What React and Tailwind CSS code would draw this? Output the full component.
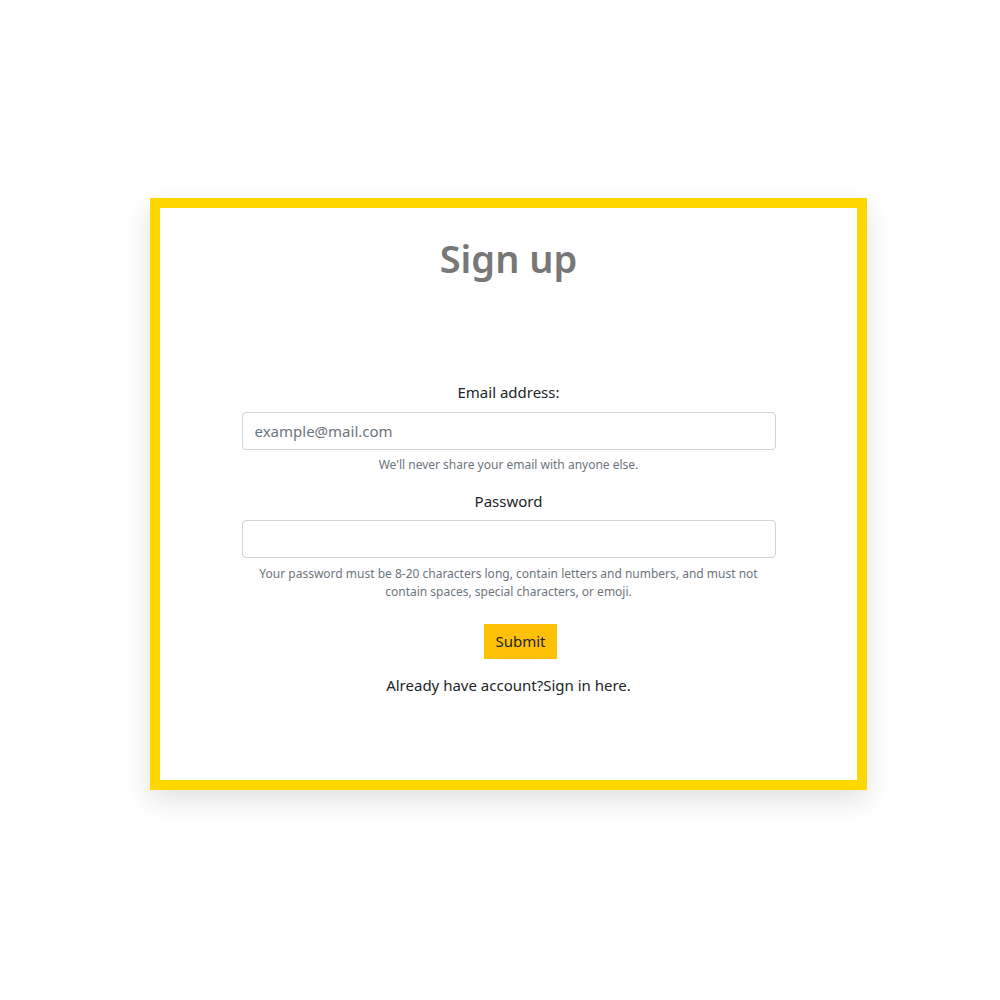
import React, { useState } from 'react';

const App = () => {
    const [email, setEmail] = useState('');
    const [password, setPassword] = useState('');

    return (
        <div className="min-h-[1000px] bg-white pt-[198px] pl-[150px]" style={{ fontFamily: '"Noto Sans", "Open Sans", sans-serif' }}>
            <div className="w-[717px] h-[592px] border-[10px] border-[#ffd700] bg-white shadow-[0_10px_25px_rgba(0,0,0,0.12)] flex flex-col items-center">
                <h1 className="mt-[23px] text-[38px] font-semibold text-[#777] leading-[54px]">Sign up</h1>

                <form className="mt-[95px] w-[534px] flex flex-col items-center" onSubmit={(e) => e.preventDefault()}>
                    <label className="text-[15px] text-[#212529] leading-[24px]">Email address:</label>
                    <input
                        type="email"
                        placeholder="example@mail.com"
                        value={email}
                        onChange={(e) => setEmail(e.target.value)}
                        className="mt-[8px] w-full h-[38px] px-3 border border-[#ced4da] rounded-[4px] text-[15px] text-[#212529] placeholder-[#6c757d] outline-none"
                    />
                    <p className="mt-[6px] text-[12px] text-[#6c757d] leading-[18px]">We'll never share your email with anyone else.</p>

                    <label className="mt-[15px] text-[15px] text-[#212529] leading-[24px]">Password</label>
                    <input
                        type="password"
                        value={password}
                        onChange={(e) => setPassword(e.target.value)}
                        className="mt-[7px] w-full h-[38px] px-3 border border-[#ced4da] rounded-[4px] text-[15px] outline-none"
                    />
                    <p className="mt-[7px] text-[12px] text-[#6c757d] leading-[18px] text-center px-4">
                        Your password must be 8-20 characters long, contain letters and numbers, and must not contain spaces, special characters, or emoji.
                    </p>

                    <button type="submit" className="mt-[23px] ml-[24px] w-[73px] h-[35px] bg-[#ffc107] text-[15px] text-[#212529]">Submit</button>

                    <p className="mt-[14px] text-[15px] text-[#212529] leading-[24px]">
                        Already have account?<a href="#" className="text-[#212529]">Sign in here.</a>
                    </p>
                </form>
            </div>
        </div>
    );
};

export default App;
